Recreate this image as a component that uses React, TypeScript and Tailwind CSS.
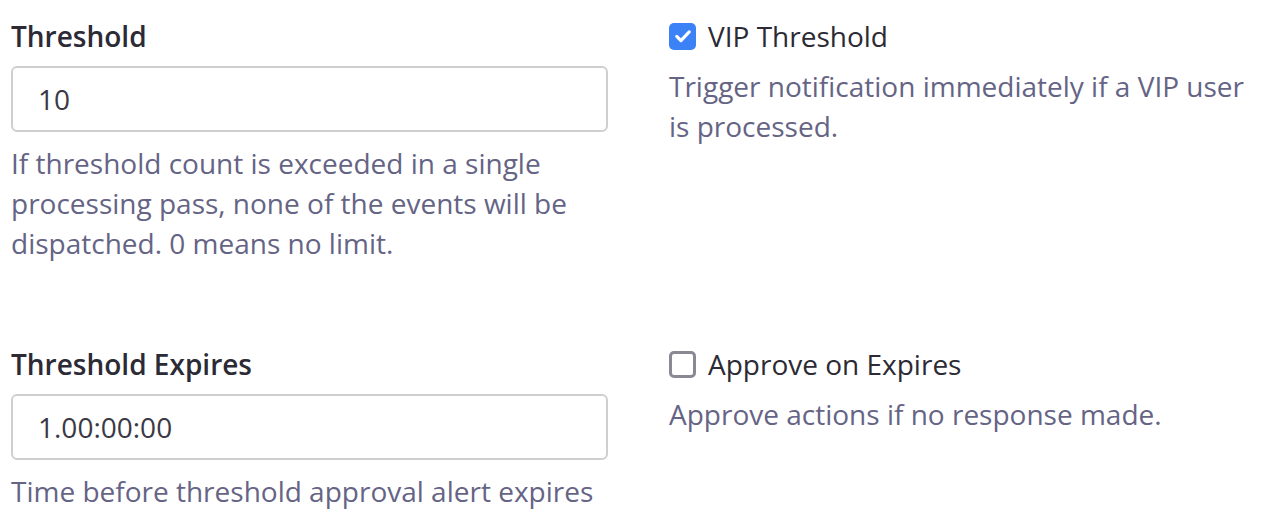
import React from "react";

function Check({ checked }: { checked: boolean }) {
  return checked ? (
    <span className="flex h-[27px] w-[27px] shrink-0 items-center justify-center rounded-[5px] bg-[#3b82f6]">
      <svg width="20" height="20" viewBox="0 0 24 24" fill="none" stroke="white" strokeWidth="3.8" strokeLinecap="round" strokeLinejoin="round">
        <path d="M4.5 12.5l5 5L19.5 7" />
      </svg>
    </span>
  ) : (
    <span className="block h-[27px] w-[27px] shrink-0 rounded-[5px] border-[3px] border-[#8a8894] bg-white" />
  );
}

function Field({ label, value, help }: { label: string; value: string; help: string }) {
  return (
    <div className="flex flex-col">
      <div className="text-[28px] font-semibold leading-[40px] text-[#2b2a35]">{label}</div>
      <div className="mt-[10px] flex h-[66px] items-center rounded-[6px] border-2 border-[#cfcfcf] bg-white px-[25px] text-[28px] text-[#3a3945]">
        {value}
      </div>
      <div className="mt-[11px] text-[28px] leading-[40px] text-[#656485]">{help}</div>
    </div>
  );
}

function Toggle({ label, checked, help }: { label: string; checked: boolean; help: string }) {
  return (
    <div className="flex flex-col">
      <div className="flex h-[40px] items-center gap-[12px]">
        <Check checked={checked} />
        <span className="text-[28px] leading-[40px] text-[#2b2a35]">{label}</span>
      </div>
      <div className="mt-[10px] text-[28px] leading-[40px] text-[#656485]">{help}</div>
    </div>
  );
}

export default function App() {
  return (
    <div
      className="h-[532px] w-[1276px] overflow-hidden bg-white pl-[11px] pt-[16px]"
      style={{ fontFamily: '"Open Sans", sans-serif' }}
    >
      <div className="grid grid-cols-[597px_597px] gap-x-[61px] gap-y-[81px]">
        <Field
          label="Threshold"
          value="10"
          help="If threshold count is exceeded in a single processing pass, none of the events will be dispatched. 0 means no limit."
        />
        <Toggle
          label="VIP Threshold"
          checked
          help="Trigger notification immediately if a VIP user is processed."
        />
        <Field
          label="Threshold Expires"
          value="1.00:00:00"
          help="Time before threshold approval alert expires"
        />
        <Toggle label="Approve on Expires" checked={false} help="Approve actions if no response made." />
      </div>
    </div>
  );
}
